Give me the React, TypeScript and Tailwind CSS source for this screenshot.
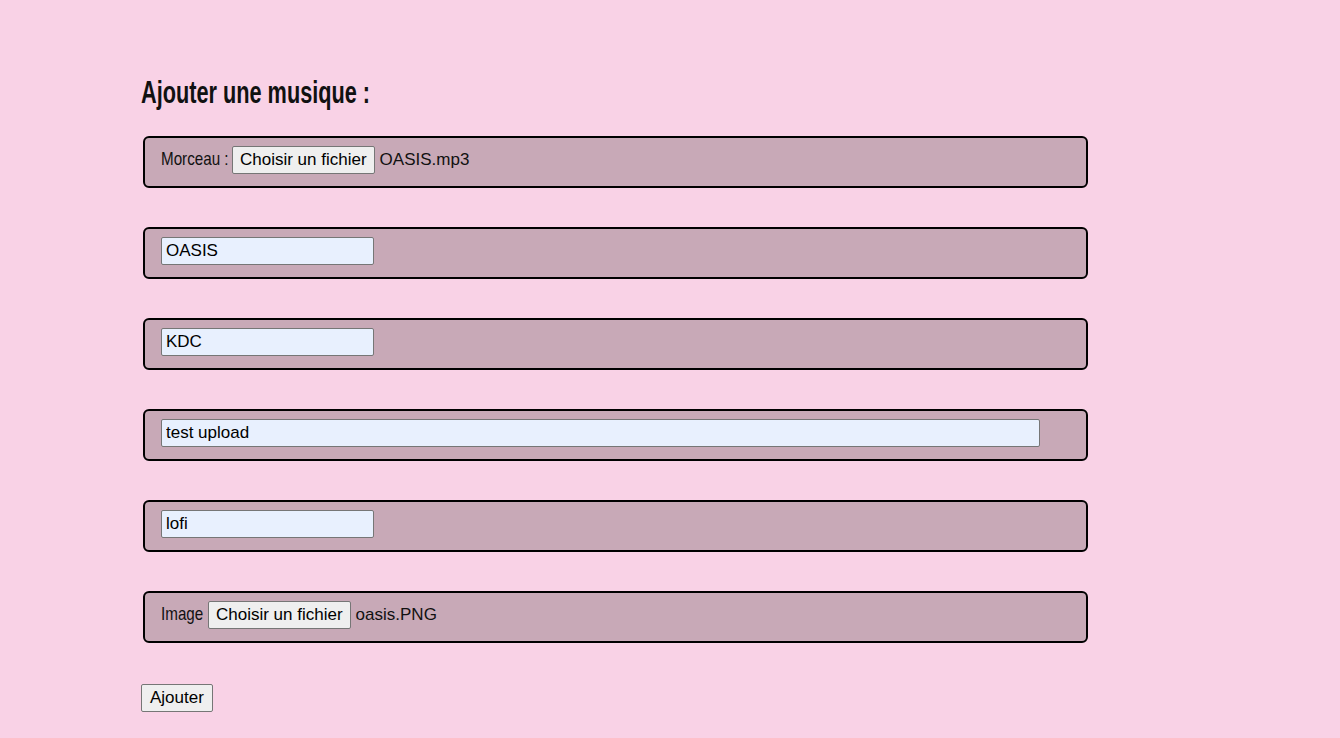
import { useState } from 'react'

const box = 'flex h-[52px] w-[945px] items-start rounded-[6px] border-2 border-black bg-[#c8a9b7] px-[16px] pt-[8px]'
const input =
  'h-[28px] rounded-[2px] border border-[#767676] bg-[#e8f0fe] px-[4px] text-[17px] text-black outline-none'
const btn =
  'h-[28px] rounded-[2px] border border-[#767676] bg-[#efefef] px-[7px] text-[17px] text-black'

// police étroite : pas de "narrow" installée, on compresse Liberation Sans
function Narrow({ w, children }: { w: string; children: React.ReactNode }) {
  return (
    <span className={`${w} shrink-0 whitespace-nowrap text-[19px] leading-[26px] text-[#111]`}>
      <span className="inline-block origin-left scale-x-[0.8]">{children}</span>
    </span>
  )
}

export default function App() {
  const [titre, setTitre] = useState('OASIS')
  const [artiste, setArtiste] = useState('KDC')
  const [desc, setDesc] = useState('test upload')
  const [genre, setGenre] = useState('lofi')

  return (
    <div className="min-h-[738px] w-full bg-[#f9d2e6] pl-[141px] pt-[71px] [font-family:'Liberation_Sans',Arial,sans-serif]">
      <h2 className="mb-[27px] h-[38px] whitespace-nowrap text-[31px] font-bold leading-[44px] text-[#111]">
        <span className="inline-block origin-left scale-x-[0.7]">Ajouter une musique :</span>
      </h2>
      <form className="flex flex-col gap-[39px] pl-[2px]" onSubmit={(e) => e.preventDefault()}>
        <div className={box}>
          <Narrow w="w-[67px]">Morceau :</Narrow>
          <button type="button" className={`${btn} ml-[4px]`}>Choisir un fichier</button>
          <span className="ml-[5px] text-[17px] leading-[28px] text-[#111]">OASIS.mp3</span>
        </div>
        <div className={box}>
          <input className={`${input} w-[213px]`} value={titre} onChange={(e) => setTitre(e.target.value)} />
        </div>
        <div className={box}>
          <input className={`${input} w-[213px]`} value={artiste} onChange={(e) => setArtiste(e.target.value)} />
        </div>
        <div className={box}>
          <input className={`${input} w-[879px]`} value={desc} onChange={(e) => setDesc(e.target.value)} />
        </div>
        <div className={box}>
          <input className={`${input} w-[213px]`} value={genre} onChange={(e) => setGenre(e.target.value)} />
        </div>
        <div className={box}>
          <Narrow w="w-[42px]">Image</Narrow>
          <button type="button" className={`${btn} ml-[5px]`}>Choisir un fichier</button>
          <span className="ml-[5px] text-[17px] leading-[28px] text-[#111]">oasis.PNG</span>
        </div>
      </form>
      <button type="submit" className={`${btn} mt-[41px] px-[8px]`}>Ajouter</button>
    </div>
  )
}
